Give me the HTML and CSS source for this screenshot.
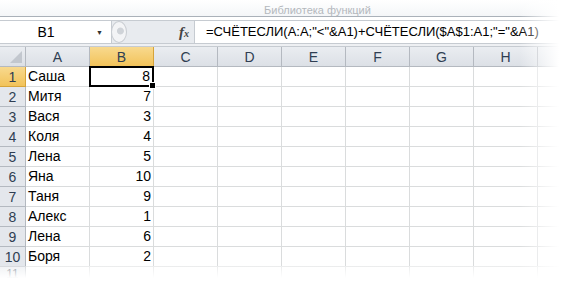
FILE: index.html
```html
<!DOCTYPE html>
<html>
<head>
  <meta charset="UTF-8">
  <title>Excel</title>
  <link rel="stylesheet" href="styles.css">
</head>
<body>
  <div class="ribbon">
    <span class="group-label">Библиотека функций</span>
  </div>

  <div class="fbar">
    <div class="namebox">
      <span class="cellref">B1</span>
      <span class="drop">&#9660;</span>
    </div>
    <div class="splitter">
      <span class="knob"></span>
      <span class="fx"><i>f</i><small>x</small></span>
    </div>
    <div class="formula">=СЧЁТЕСЛИ(A:A;"&lt;"&amp;A1)+СЧЁТЕСЛИ($A$1:A1;"="&amp;A1)</div>
  </div>
  <div class="strip"></div>

  <div class="sheet">
    <div class="corner"><span class="tri"></span></div>
    <div class="colhead">A</div>
    <div class="colhead on">B</div>
    <div class="colhead">C</div>
    <div class="colhead">D</div>
    <div class="colhead">E</div>
    <div class="colhead">F</div>
    <div class="colhead">G</div>
    <div class="colhead">H</div>
    <div class="colhead"></div>

    <div class="rowhead on">1</div><div class="cell">Саша</div><div class="cell num sel">8</div><div class="cell"></div><div class="cell"></div><div class="cell"></div><div class="cell"></div><div class="cell"></div><div class="cell"></div><div class="cell"></div>
    <div class="rowhead">2</div><div class="cell">Митя</div><div class="cell num">7</div><div class="cell"></div><div class="cell"></div><div class="cell"></div><div class="cell"></div><div class="cell"></div><div class="cell"></div><div class="cell"></div>
    <div class="rowhead">3</div><div class="cell">Вася</div><div class="cell num">3</div><div class="cell"></div><div class="cell"></div><div class="cell"></div><div class="cell"></div><div class="cell"></div><div class="cell"></div><div class="cell"></div>
    <div class="rowhead">4</div><div class="cell">Коля</div><div class="cell num">4</div><div class="cell"></div><div class="cell"></div><div class="cell"></div><div class="cell"></div><div class="cell"></div><div class="cell"></div><div class="cell"></div>
    <div class="rowhead">5</div><div class="cell">Лена</div><div class="cell num">5</div><div class="cell"></div><div class="cell"></div><div class="cell"></div><div class="cell"></div><div class="cell"></div><div class="cell"></div><div class="cell"></div>
    <div class="rowhead">6</div><div class="cell">Яна</div><div class="cell num">10</div><div class="cell"></div><div class="cell"></div><div class="cell"></div><div class="cell"></div><div class="cell"></div><div class="cell"></div><div class="cell"></div>
    <div class="rowhead">7</div><div class="cell">Таня</div><div class="cell num">9</div><div class="cell"></div><div class="cell"></div><div class="cell"></div><div class="cell"></div><div class="cell"></div><div class="cell"></div><div class="cell"></div>
    <div class="rowhead">8</div><div class="cell">Алекс</div><div class="cell num">1</div><div class="cell"></div><div class="cell"></div><div class="cell"></div><div class="cell"></div><div class="cell"></div><div class="cell"></div><div class="cell"></div>
    <div class="rowhead">9</div><div class="cell">Лена</div><div class="cell num">6</div><div class="cell"></div><div class="cell"></div><div class="cell"></div><div class="cell"></div><div class="cell"></div><div class="cell"></div><div class="cell"></div>
    <div class="rowhead">10</div><div class="cell">Боря</div><div class="cell num">2</div><div class="cell"></div><div class="cell"></div><div class="cell"></div><div class="cell"></div><div class="cell"></div><div class="cell"></div><div class="cell"></div>
    <div class="rowhead last">11</div><div class="cell"></div><div class="cell"></div><div class="cell"></div><div class="cell"></div><div class="cell"></div><div class="cell"></div><div class="cell"></div><div class="cell"></div><div class="cell"></div>
  </div>

  <div class="fade-right"></div>
  <div class="fade-bottom"></div>
</body>
</html>
```

FILE: styles.css
```css
body {
  margin: 0;
  width: 569px;
  height: 282px;
  overflow: hidden;
  background: #fff;
  font-family: "Liberation Sans", Arial, sans-serif;
  color: #000;
  position: relative;
}
.ribbon {
  height: 16px;
  border-bottom: 1px solid #aab1b9;
  background: linear-gradient(#fff, #f4f6f8);
  text-align: center;
  padding-left: 66px;
}
.group-label {
  font-size: 11px;
  line-height: 16px;
  color: #b4b8bd;
}
.fbar {
  margin-top: 3px;
  height: 22px;
  display: flex;
  border-top: 1px solid #c6cbd1;
  border-bottom: 1px solid #c6cbd1;
  background: #fff;
}
.namebox {
  width: 112px;
  display: flex;
  align-items: center;
  border-right: 1px solid #c6cbd1;
  box-sizing: border-box;
}
.cellref {
  font-size: 14px;
  width: 92px;
  text-align: center;
}
.drop {
  font-size: 7px;
  color: #333;
  margin-left: 4px;
}
.splitter {
  width: 82px;
  background: #e8ebef;
  display: flex;
  align-items: center;
  justify-content: space-between;
  border-right: 1px solid #c6cbd1;
}
.knob {
  width: 14px;
  height: 20px;
  margin-left: -1px;
  border-radius: 50%;
  background: radial-gradient(circle at 60% 45%, #cfd3d8 22%, #f3f4f6 28%);
  border: 1px solid #c9cdd2;
}
.fx {
  font-family: "Liberation Serif", serif;
  font-size: 15px;
  font-weight: bold;
  color: #444;
  margin-right: 5px;
}
.fx small {
  font-size: 10px;
  font-style: italic;
}
.formula {
  flex: 1;
  font-size: 13px;
  line-height: 22px;
  padding-left: 11px;
  white-space: nowrap;
  overflow: hidden;
}
.strip {
  height: 2px;
  background: #eef0f3;
  border-bottom: 1px solid #c6cbd1;
}
.sheet {
  display: grid;
  grid-template-columns: 26px repeat(8, 64px) 31px;
  grid-template-rows: repeat(11, 20px) 16px;
  font-size: 14px;
}
.corner,
.colhead,
.rowhead {
  background: linear-gradient(#eaedf1, #dce0e6);
  color: #2f3e52;
  box-sizing: border-box;
  border-right: 1px solid #b4b9c0;
  border-bottom: 1px solid #b4b9c0;
  display: flex;
  align-items: center;
  justify-content: center;
}
.colhead.on,
.rowhead.on {
  background: linear-gradient(#f8d98e, #f2c35a);
  border-color: #d6a43a;
}
.rowhead {
  background: #e4e7ec;
  font-size: 14px;
}
.rowhead.last {
  font-size: 12px;
  align-items: flex-start;
}
.corner {
  position: relative;
}
.tri {
  position: absolute;
  right: 3px;
  bottom: 3px;
  width: 0;
  height: 0;
  border-left: 12px solid transparent;
  border-bottom: 12px solid #c2c7ce;
}
.cell {
  box-sizing: border-box;
  border-right: 1px solid #dadcdd;
  border-bottom: 1px solid #dadcdd;
  padding: 0 2px;
  line-height: 19px;
  white-space: nowrap;
}
.cell.num {
  text-align: right;
}
.cell.sel {
  position: relative;
  border: 2px solid #000;
  margin: -1px 0 0 -1px;
  line-height: 17px;
}
.cell.sel::after {
  content: "";
  position: absolute;
  right: -4px;
  bottom: -4px;
  width: 5px;
  height: 5px;
  background: #000;
  border: 1px solid #fff;
}
.fade-right {
  position: absolute;
  top: 0;
  right: 0;
  width: 50px;
  height: 282px;
  background: linear-gradient(to right, rgba(255,255,255,0), #fff 80%);
}
.fade-bottom {
  position: absolute;
  left: 0;
  bottom: 0;
  width: 569px;
  height: 16px;
  background: linear-gradient(rgba(255,255,255,0.45), #fff 75%);
}
```
